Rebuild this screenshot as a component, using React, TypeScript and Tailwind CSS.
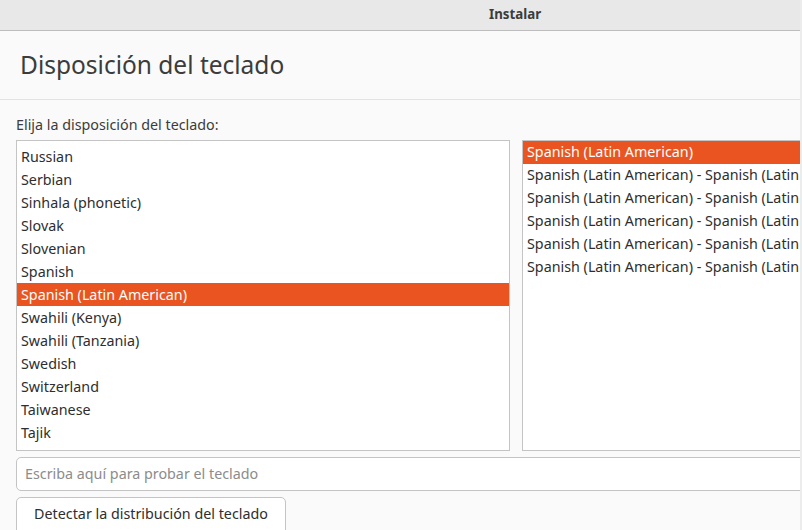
import React from "react";

const leftItems = [
  "Russian",
  "Serbian",
  "Sinhala (phonetic)",
  "Slovak",
  "Slovenian",
  "Spanish",
  "Spanish (Latin American)",
  "Swahili (Kenya)",
  "Swahili (Tanzania)",
  "Swedish",
  "Switzerland",
  "Taiwanese",
  "Tajik",
  "Tatar",
];

const rightItems = [
  "Spanish (Latin American)",
  "Spanish (Latin American) - Spanish (Latin American, Colemak)",
  "Spanish (Latin American) - Spanish (Latin American, Dvorak)",
  "Spanish (Latin American) - Spanish (Latin American, dead tilde)",
  "Spanish (Latin American) - Spanish (Latin American, no dead keys)",
  "Spanish (Latin American) - Spanish (Latin American, Colemak-DH)",
];

export default function App() {
  return (
    <div
      className="w-[802px] h-[530px] overflow-hidden flex bg-[#fafafa] text-[#3c3c3c]"
      style={{ fontFamily: '"Noto Sans", "Open Sans", sans-serif' }}
    >
      <div className="w-[800px] flex flex-col overflow-hidden">
        <div className="h-[31px] shrink-0 bg-[#e8e8e8] border-b border-[#bdbdbd] flex items-center pl-[489px] text-[13.3px] font-bold text-[#3c3c3c]">
          Instalar
        </div>
        <div className="h-[69px] shrink-0 border-b border-[#e2e2e2] flex items-center pl-[20px] text-[24.5px] text-[#3c3c3c]">
          Disposición del teclado
        </div>
        <div className="pl-[16px] pt-[16px] text-[14.3px] leading-[18px] h-[40px] shrink-0">
          Elija la disposición del teclado:
        </div>
        <div className="flex gap-[12px] pl-[16px] h-[311px] shrink-0">
          <div className="w-[494px] shrink-0 border border-[#c4c4c4] bg-white overflow-hidden">
            <div className="pt-[4px] flex flex-col">
              {leftItems.map((t) => (
                <div
                  key={t}
                  className={
                    t === "Spanish (Latin American)"
                      ? "h-[23px] leading-[23px] pl-[4px] text-[14.3px] bg-[#e95420] text-white whitespace-nowrap"
                      : "h-[23px] leading-[23px] pl-[4px] text-[14.3px] text-[#2e2e2e] whitespace-nowrap"
                  }
                >
                  {t}
                </div>
              ))}
            </div>
          </div>
          <div className="w-[300px] shrink-0 border border-[#c4c4c4] border-r-0 bg-white overflow-hidden">
            <div className="flex flex-col">
              {rightItems.map((t, i) => (
                <div
                  key={t}
                  className={
                    i === 0
                      ? "h-[23px] leading-[21px] pl-[4px] text-[14.3px] bg-[#e95420] text-white whitespace-nowrap"
                      : "h-[23px] leading-[21px] pl-[4px] text-[14.3px] text-[#2e2e2e] whitespace-nowrap"
                  }
                >
                  {t}
                </div>
              ))}
            </div>
          </div>
        </div>
        <div className="pl-[16px] pt-[6px] shrink-0">
          <div className="h-[34px] w-[800px] border border-[#c4c4c4] rounded-[5px] bg-white flex items-center pl-[8px] pb-[1px] text-[14.3px] text-[#8c8c8c]">
            Escriba aquí para probar el teclado
          </div>
        </div>
        <div className="pl-[16px] pt-[6px] shrink-0">
          <div className="h-[40px] w-[270px] border border-[#c4c4c4] rounded-[5px] bg-white flex items-start justify-center pt-[5px] text-[14.3px] text-[#2e2e2e]">
            Detectar la distribución del teclado
          </div>
        </div>
      </div>
      <div className="w-[2px] shrink-0 bg-[#ececec]" />
    </div>
  );
}
